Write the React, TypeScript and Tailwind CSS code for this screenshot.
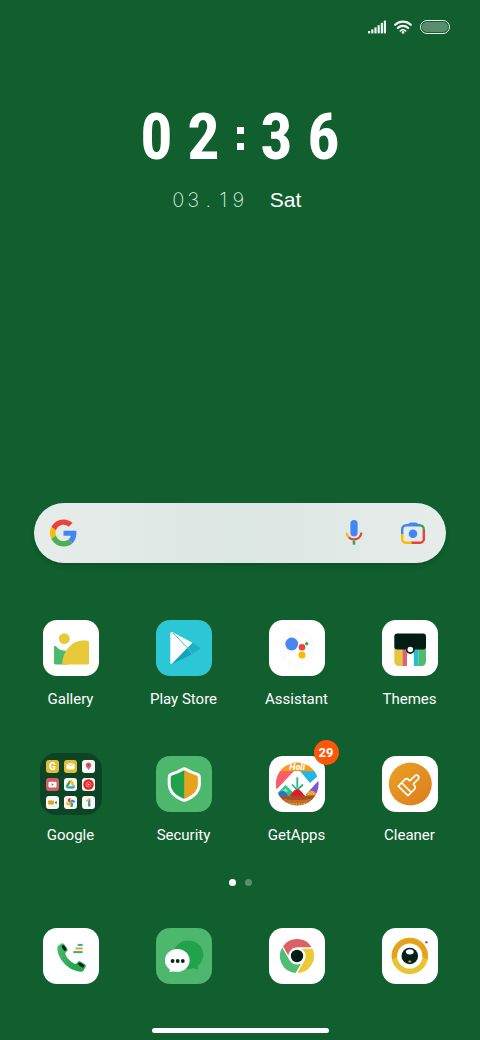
import React from 'react';

interface AppItem {
    name: string;
    icon: React.ReactNode;
    tile?: string;
    badge?: number;
}

const SignalIcon = () => (
    <svg className="w-[18px] h-[14px]" viewBox="0 0 18 14" fill="#eef5f0" aria-hidden="true">
        <rect x="0" y="11" width="2.2" height="2.4" />
        <rect x="3.2" y="9.4" width="2.2" height="4" />
        <rect x="6.4" y="7.4" width="2.2" height="6" />
        <rect x="9.6" y="5.2" width="2.2" height="8.2" />
        <rect x="12.8" y="2.8" width="2.2" height="10.6" />
        <rect x="15.8" y="0.6" width="2.2" height="12.8" />
    </svg>
);

const WifiIcon = () => (
    <svg className="w-[18px] h-[14px]" viewBox="0 0 18 14" fill="none" stroke="#eef5f0" strokeWidth="2.2" strokeLinecap="round" aria-hidden="true">
        <path d="M1.2 4.8a11.2 11.2 0 0 1 15.6 0" />
        <path d="M3.8 8a7.4 7.4 0 0 1 10.4 0" />
        <path d="M6.4 10.8a3.8 3.8 0 0 1 5.200 0" strokeWidth="1.8" />
        <circle cx="9" cy="12.4" r="1.3" fill="#eef5f0" stroke="none" />
    </svg>
);

const GoogleLogo = () => (
    <svg className="w-[27px] h-7" viewBox="0 0 48 48" aria-hidden="true">
        <path fill="#ea4335" d="M24 9.5c3.54 0 6.71 1.22 9.21 3.6l6.85-6.85C35.9 2.38 30.47 0 24 0 14.62 0 6.51 5.38 2.56 13.22l7.98 6.19C12.43 13.72 17.74 9.5 24 9.5z" />
        <path fill="#4285f4" d="M46.98 24.55c0-1.57-.15-3.09-.38-4.55H24v9.02h12.94c-.58 2.96-2.26 5.48-4.78 7.18l7.73 6c4.51-4.18 7.09-10.36 7.09-17.65z" />
        <path fill="#fbbc05" d="M10.53 28.59c-.48-1.45-.76-2.99-.76-4.59s.27-3.14.76-4.59l-7.98-6.19C.92 16.46 0 20.12 0 24c0 3.88.92 7.54 2.56 10.78l7.97-6.19z" />
        <path fill="#4caf50" d="M24 48c6.48 0 11.93-2.13 15.89-5.81l-7.73-6c-2.15 1.45-4.92 2.3-8.16 2.3-6.26 0-11.57-4.22-13.47-9.91l-7.98 6.19C6.51 42.62 14.62 48 24 48z" />
    </svg>
);

const MicIcon = () => (
    <svg className="w-[18px] h-[26px]" viewBox="0 0 18 26" fill="none" strokeWidth="2.2" aria-hidden="true">
        <rect x="5.4" y="0" width="7.2" height="16.4" rx="3.6" fill="#4285f4" />
        <path d="M1.6 12.6c.2 2 1 3.6 2.3 4.800" stroke="#fbbc05" />
        <path d="M3.7 17.2c1.4 1.4 3.2 2.2 5.3 2.2 4.1 0 7-2.8 7.4-6.8" stroke="#ea4335" />
        <path d="M9 20.5v4.2" stroke="#34a853" strokeWidth="2.6" />
    </svg>
);

const LensIcon = () => (
    <svg className="w-6 h-6" viewBox="0 0 24 24" fill="none" strokeWidth="2.4" aria-hidden="true">
        <path d="M1.2 13.4V8.2a4 4 0 0 1 4-4h13" stroke="#4285f4" />
        <path d="M7 5V3.6C7.600 2.2 8.6 1.4 10 1.4h4.4c1.4 0 2.4.8 3 2.2V5z" fill="#4285f4" />
        <path d="M18 4.2h.8a4 4 0 0 1 4 4v.9" stroke="#34a853" />
        <path d="M22.8 9v9.2a3.6 3.6 0 0 1-3.6 3.6h-9" stroke="#ea4335" />
        <path d="M1.2 13v5.2a3.6 3.6 0 0 0 3.6 3.6h5.6" stroke="#fbbc05" />
        <circle cx="12" cy="12.8" r="4.3" fill="#4285f4" />
    </svg>
);

const GalleryIcon = () => (
    <svg viewBox="0 0 56 56" aria-hidden="true">
        <path fill="#4cb96d" d="M11 27.2c0-1.2 1.4-1.7 2.2-.8 2.8 3.4 7 5 12 4.2L25 44.4H12.4c-.8 0-1.4-.6-1.4-1.4z" />
        <path fill="#e8c93a" d="M19.2 44.4C19.4 31 28.5 20.4 41 20.4c1.6 0 2.7.1 3.7.3.9.2 1.3.7 1.3 1.6V43c0 .8-.6 1.4-1.4 1.4z" />
        <circle cx="21.3" cy="18.6" r="5.4" fill="#e8c93a" />
    </svg>
);

const PlayIcon = () => (
    <svg viewBox="0 0 56 56" aria-hidden="true">
        <path fill="#1db0c6" d="M36.2 22.4 43.7 27.4c.7.5.7 1.2 0 1.7L36 34.3 16 44z" />
        <path fill="#fff" d="M14.3 13.6c0-1.500 1.200-2.200 2.500-1.300L36.4 22.8 16.4 43.2c-1 1-2.1.6-2.1-.8z" />
        <path fill="#179cb3" d="M31.6 27.7 36.3 34.2 16.4 43.7z" opacity=".7" />
        <path d="M17.2 13 31.5 28" stroke="#2bbccd" strokeWidth=".9" />
        <path d="M31.5 28 36 34" stroke="#5ad4e2" strokeWidth=".7" />
    </svg>
);

const AssistantIcon = () => (
    <svg viewBox="0 0 56 56" aria-hidden="true">
        <circle cx="28" cy="28" r="17" fill="#fefefe" stroke="#f5f5f5" strokeWidth=".8" />
        <circle cx="22.7" cy="24" r="6.4" fill="#4a86f0" />
        <circle cx="33" cy="27.3" r="3.3" fill="#e8453c" />
        <circle cx="37.7" cy="23.7" r="1.7" fill="#35a853" />
        <circle cx="33" cy="35" r="3.6" fill="#fbb90d" />
    </svg>
);

const ThemesIcon = () => (
    <svg viewBox="0 0 56 56" aria-hidden="true">
        <path fill="#e6c63c" d="M12.3 27h8.1v19h-3.6a4.5 4.5 0 0 1-4.5-4.5z" />
        <path fill="#d9666a" d="M20.4 27h5v19h-5z" />
        <path fill="#1fc2d3" d="M31.6 27h4.7v19h-4.7z" />
        <path fill="#4eba70" d="M36.3 27H44v14.5a4.5 4.500 0 0 1-4.5 4.5h-3.2z" />
        <path fill="#fff" d="M25 46V35.500a3.4 3.4 0 0 1 6.8 0V46z" />
        <rect x="12.3" y="13.5" width="31.7" height="16" rx="3" fill="#031d15" />
        <circle cx="28.3" cy="29.5" r="4.4" fill="#031d15" />
        <circle cx="28.3" cy="29.5" r="2.8" fill="#fff" />
    </svg>
);

const SecurityIcon = () => (
    <svg viewBox="0 0 56 56" aria-hidden="true">
        <path fill="#1fa24b" d="M28.3 12.8c-4.3 2.7-8.2 4.3-12.2 5.2-1.5.4-2.4 1.3-2.4 2.8v7.2c0 7.4 5.4 12.6 12.7 15.8.7.3 1.3.4 1.9.4z" />
        <path fill="#e7a31d" d="M28.3 12.8c4.3 2.7 8.2 4.3 12.2 5.2 1.5.4 2.4 1.3 2.4 2.8v7.2c0 7.4-5.4 12.6-12.7 15.8-.7.3-1.3.4-1.9.4z" />
        <path fill="none" stroke="#fff" strokeWidth="3" strokeLinejoin="round" d="M26.6 13.3c1.2-.7 2.2-.7 3.4 0 3.4 2.2 6.8 3.6 10.4 4.6 2 .6 3 1.7 3 3.5v7c0 6.9-5.2 11.7-12.6 15.3-1.7.8-3.3.8-5 0-7.4-3.6-12.6-8.4-12.6-15.300v-7c0-1.800 1-2.900 3-3.500 3.600-1 7-2.400 10.400-4.600z" />
    </svg>
);

const GetAppsIcon = () => (
    <svg viewBox="0 0 56 56" aria-hidden="true">
        <defs>
            <clipPath id="holi-disc">
                <circle cx="28.2" cy="28" r="21.4" />
            </clipPath>
        </defs>
        <g clipPath="url(#holi-disc)">
            <rect x="6" y="6" width="45" height="45" fill="#fff" />
            <path fill="#fb5c6c" d="M6 15h19L7 34z" />
            <path fill="#20b7e6" d="M31 15h19v4l-9 8z" />
            <path fill="#7c56d6" d="M50 24v15H36.500z" />
            <path fill="#35c483" d="M8 42V37.500l8.500-8.500L26 38v4z" />
            <path fill="#8ce0b4" d="m16.5 32 2.5 3-3 2-2.5-2z" />
            <rect x="6" y="6" width="45" height="9.2" fill="#f99a18" />
            <path d="M28.3 22v9M28.3 34l-4.8-5M28.3 34l5.2-5" stroke="#22b982" strokeWidth="1.8" strokeLinecap="round" />
            <path fill="#2074d8" d="M8.5 40c.8-3.5 3-5 5.3-5s4 2 5.2 5z" />
            <path fill="#f5a623" d="M37 40c1.2-3.5 3.5-5.2 5.6-5.2S47 36.5 48 40z" />
            <path fill="#dc1b2b" d="M20 40c2.5-1 4.2-6.800 8.300-6.800s5.800 5.800 8.200 6.800z" />
            <path fill="#a2531f" d="M6 40c7-1.500 14 1 22 .5S43 38 51 40v12H6z" />
            <path fill="#c46d2a" d="M14 42.500c9 2 19 2 29 0l-4 5c-7 2-14 2-21 0z" />
            <path d="M17 46.500c7 2 16 2 23 0" fill="none" stroke="#f0a63c" strokeWidth="1.2" strokeDasharray="1.5 1" />
            <path fill="#d52a35" d="m21 39 14 0-2 2.200-10 0z" />
        </g>
        <text x="28.2" y="14.2" textAnchor="middle" fontSize="9" fontWeight="900" fontStyle="italic" fontFamily="Roboto, sans-serif" fill="#fff">Holi</text>
    </svg>
);

const CleanerIcon = () => (
    <svg viewBox="0 0 56 56" fill="none" aria-hidden="true">
        <defs>
            <linearGradient id="cleaner-disc" x1="0" y1="0" x2="1" y2="1">
                <stop offset="0" stopColor="#e9a224" />
                <stop offset="1" stopColor="#dd7c1c" />
            </linearGradient>
        </defs>
        <circle cx="28.3" cy="28" r="21.5" fill="url(#cleaner-disc)" />
        <g transform="translate(26.4 29.6) rotate(45)" stroke="#fff" strokeWidth="1.7" strokeLinejoin="round">
            <path d="M-6.8 7.5v-9.500a2.300 2.300 0 0 1 2.300-2.300h1.300c.6 0 .9-.4.9-1v-6.200a2.300 2.300 0 0 1 4.600 0v6.200c0 .6.3 1 .9 1h1.300a2.300 2.300 0 0 1 2.300 2.300v9.500z" />
            <path d="M-6.800 2.800H6.800" />
        </g>
    </svg>
);

const PhoneIcon = () => (
    <svg viewBox="0 0 56 56" aria-hidden="true">
        <defs>
            <linearGradient id="handset" x1="0" y1="0" x2="1" y2="1">
                <stop offset="0" stopColor="#4fbd70" />
                <stop offset=".7" stopColor="#27a552" />
            </linearGradient>
        </defs>
        <path fill="url(#handset)" d="M15.8 17.3 18.4 15.5c.9-.6 1.9-.4 2.6.4l3.3 4.6c.8 1.2.5 2.3-.6 3-1.6 1-1.6 2.5-.5 4.5 1.7 3 4.2 5.5 7.3 7.3 1.7 1 3.1.6 3.9-.8.7-1.3 1.8-1.6 3-.9l4.4 2.7c1.2.7 1.4 1.8.7 2.9l-2 3.2c-.6.9-1.3 1.3-2.5 1.3-11.6-.6-23-11.6-23.7-23.2 0-1.4.4-2.5 1.5-3.2z" />
        <path d="m20.2 18.6 1.800 2.700M36.700 36.100l3 1.900" stroke="#06231a" strokeWidth="3" strokeLinecap="round" />
        <path d="M34.7 16.9h5" stroke="#18b3c6" strokeWidth="2" />
        <path d="M32.5 20.5h7.2" stroke="#eba01f" strokeWidth="2" />
        <path d="M30.3 24.1h9.4" stroke="#3db266" strokeWidth="2" />
    </svg>
);

const MessagesIcon = () => (
    <svg viewBox="0 0 56 56" aria-hidden="true">
        <ellipse cx="32.3" cy="26.8" rx="15" ry="14.2" fill="#22a24d" />
        <path fill="#22a24d" d="M35 38h7.5c-.7 1-.9 2-.4 3.2-2.6.3-5-.6-7.1-3.2z" />
        <ellipse cx="21.3" cy="32.4" rx="12.3" ry="11.4" fill="#fff" />
        <path fill="#fff" d="M13 38c1.3 2 1.2 3.8.2 5.8 2.4.4 4.5-.3 6.3-1.8z" />
        <circle cx="16.6" cy="33" r="1.9" fill="#06231a" />
        <circle cx="21.7" cy="33" r="1.9" fill="#06231a" />
        <circle cx="26.8" cy="33" r="1.9" fill="#06231a" />
    </svg>
);

const ChromeIcon = () => (
    <svg viewBox="0 0 56 56" aria-hidden="true">
        <g transform="translate(28 28)" stroke="#fff" strokeWidth="1.2" strokeLinejoin="round">
            <path fill="#da6166" d="M0-8H15.8A17.7 17.7 0 0 0-14.8-9.7L-6.9 4A8 8 0 0 1 0-8z" />
            <path fill="#ecc937" transform="rotate(120)" d="M0-8H15.8A17.7 17.7 0 0 0-14.8-9.7L-6.9 4A8 8 0 0 1 0-8z" />
            <path fill="#4fbd72" transform="rotate(240)" d="M0-8H15.8A17.7 17.7 0 0 0-14.8-9.7L-6.9 4A8 8 0 0 1 0-8z" />
        </g>
        <circle cx="28" cy="28" r="6.2" fill="#031d15" />
    </svg>
);

const CameraIcon = () => (
    <svg viewBox="0 0 56 56" aria-hidden="true">
        <circle cx="27.8" cy="28" r="18.2" fill="#e9c432" />
        <path fill="#e4a21b" d="M27.8 9.8A18.2 18.2 0 0 0 10 31.500l5-2.500h25.600l5 2.500A18.200 18.200 0 0 0 27.8 9.800z" />
        <circle cx="27.8" cy="28" r="12.6" fill="#fff" />
        <circle cx="27.8" cy="28" r="8.3" fill="#06201a" />
        <ellipse cx="27.8" cy="23.8" rx="3.9" ry="2.6" fill="#fff" />
        <ellipse cx="27.8" cy="33.5" rx="1.6" ry="1.1" fill="#e9b21b" />
        <circle cx="44.4" cy="14.2" r="1.2" fill="#d9485c" />
    </svg>
);

const folderItems = [
    {
        name: 'Search',
        tile: 'bg-[#e3bd33]',
        icon: <text x="6.5" y="10" textAnchor="middle" fontSize="10" fontWeight="800" fontFamily="Roboto, sans-serif" fill="#fff">G</text>,
    },
    {
        name: 'Mail',
        tile: 'bg-[#e3bd33]',
        icon: <path fill="#fff" d="M2.5 3.8 6.500 6l4-2.200V8A1.500 1.500 0 0 1 9 9.500H4A1.500 1.500 0 0 1 2.500 8z M3.300 3.300h6.400l-3.200 1.900z" />,
    },
    {
        name: 'Maps',
        tile: 'bg-[#f7f7f5]',
        icon: (
            <>
                <path fill="#d8606b" d="M6.5 2.5a2.7 2.7 0 0 1 2.7 2.7c0 2-2 2.7-2.7 5-.7-2.3-2.7-3-2.7-5a2.7 2.7 0 0 1 2.7-2.7z" />
                <circle cx="6.5" cy="5.2" r="1" fill="#a8323f" />
            </>
        ),
    },
    {
        name: 'YouTube',
        tile: 'bg-[#d55f66]',
        icon: (
            <>
                <rect x="2.5" y="3.7" width="8" height="5.8" rx="1.3" fill="#fff" />
                <path fill="#d55f66" d="m5.600 5.200 2.400 1.400L5.600 8z" />
            </>
        ),
    },
    {
        name: 'Drive',
        tile: 'bg-[#f7f7f5]',
        icon: (
            <>
                <path fill="#2ba84f" d="m5.200 2.300-3.500 6 1.400 2.300 3.400-6z" />
                <path fill="#fbbc05" d="M5.200 2.300h2.700l3.400 6H8.600z" />
                <path fill="#1f9df0" d="M4.500 8.300h6.800l-1.300 2.300H3.100z" />
            </>
        ),
    },
    {
        name: 'Music',
        tile: 'bg-[#f7f7f5]',
        icon: (
            <>
                <circle cx="6.5" cy="6.5" r="5.2" fill="#ee1c1c" />
                <circle cx="6.5" cy="6.5" r="2.6" fill="none" stroke="#fff" strokeWidth=".5" />
                <path fill="#fff" d="m5.700 5.300 2.100 1.200-2.100 1.200z" />
            </>
        ),
    },
    {
        name: 'Meet',
        tile: 'bg-[#f7f7f5]',
        icon: (
            <>
                <rect x="2.2" y="4.6" width="5.6" height="4" rx=".6" fill="#e3a51f" />
                <path fill="#2ba84f" d="m8.500 6.500 2.300-1.700v3.800z" />
            </>
        ),
    },
    {
        name: 'Photos',
        tile: 'bg-[#f7f7f5]',
        icon: (
            <>
                <path fill="#ea4335" d="M6.5 6.5V2a2.200 2.200 0 0 0-1 4.500z" />
                <path fill="#4285f4" d="M6.500 6.500H11a2.200 2.200 0 0 0-4.500-1z" />
                <path fill="#34a853" d="M6.500 6.500V11a2.200 2.200 0 0 0 1-4.500z" />
                <path fill="#fbbc05" d="M6.500 6.500H2a2.200 2.200 0 0 0 4.500 1z" />
            </>
        ),
    },
    {
        name: 'One',
        tile: 'bg-[#f7f7f5]',
        icon: (
            <>
                <path d="M7.2 3.500v6" stroke="#4285f4" strokeWidth="2.2" strokeLinecap="round" />
                <path d="M7.2 8v1.500" stroke="#34a853" strokeWidth="2.2" strokeLinecap="round" />
                <path d="M4.800 4.700 7 3.400" stroke="#fbbc05" strokeWidth="1.800" strokeLinecap="round" />
            </>
        ),
    },
];

const GoogleFolder = () => (
    <div className="w-[62px] h-[62px] shrink-0 rounded-2xl bg-[#0e4426] grid grid-cols-[repeat(3,13px)] gap-[5px] place-content-center">
        {folderItems.map((item) => (
            <svg key={item.name} viewBox="0 0 13 13" className={`w-[13px] h-[13px] rounded-[3px] ${item.tile}`} aria-hidden="true">
                {item.icon}
            </svg>
        ))}
    </div>
);

const homeApps: AppItem[] = [
    { name: 'Gallery', icon: <GalleryIcon /> },
    { name: 'Play Store', icon: <PlayIcon />, tile: 'bg-[#2bc7d7]' },
    { name: 'Assistant', icon: <AssistantIcon /> },
    { name: 'Themes', icon: <ThemesIcon /> },
    { name: 'Google', icon: <GoogleFolder />, tile: 'bg-transparent' },
    { name: 'Security', icon: <SecurityIcon />, tile: 'bg-[#4db76d]' },
    { name: 'GetApps', icon: <GetAppsIcon />, badge: 29 },
    { name: 'Cleaner', icon: <CleanerIcon /> },
];

const dockApps: AppItem[] = [
    { name: 'Phone', icon: <PhoneIcon /> },
    { name: 'Messages', icon: <MessagesIcon />, tile: 'bg-[#4db76d]' },
    { name: 'Chrome', icon: <ChromeIcon /> },
    { name: 'Camera', icon: <CameraIcon /> },
];

const AppTile: React.FC<{ item: AppItem; showLabel?: boolean }> = ({ item, showLabel = false }) => (
    <button type="button" aria-label={showLabel ? undefined : item.name} className="flex flex-col items-center gap-[13px]">
        <span className={`relative w-14 h-14 rounded-[14px] flex items-center justify-center ${item.tile ?? 'bg-white'}`}>
            {item.icon}
            {item.badge && (
                <span className="absolute -top-4 -right-3.5 w-[25px] h-[25px] rounded-full bg-[#fc5606] text-[13px] leading-none font-bold flex items-center justify-center">
                    {item.badge}
                </span>
            )}
        </span>
        {showLabel && <span className="text-[15px] leading-5 whitespace-nowrap">{item.name}</span>}
    </button>
);

const Clock = () => (
    <div className="flex flex-col items-center">
        <time className="flex text-[64px] leading-[72px] font-bold font-['Roboto_Condensed',Roboto,sans-serif]">
            <span className="w-[47px] text-center">0</span>
            <span className="w-[47px] text-center">2</span>
            <span className="w-[26px] flex flex-col items-center justify-center gap-[9px]" aria-label=":">
                <i className="w-[7px] h-[7px] bg-white" />
                <i className="w-[7px] h-[7px] bg-white" />
            </span>
            <span className="w-[47px] text-center">3</span>
            <span className="w-[47px] text-center">6</span>
        </time>
        <div className="mt-3 pr-2 flex items-center gap-6 leading-7">
            <div className="flex font-[Inter,sans-serif] text-xl leading-7 font-extralight text-[#dcebe0]">
                {['0', '3', '.', '1', '9'].map((char, i) => (
                    <span key={i} className="w-[15px] text-center">{char}</span>
                ))}
            </div>
            <span className="font-['Liberation_Sans',sans-serif] text-[21px]">Sat</span>
        </div>
    </div>
);

const App = () => (
    <div className="min-h-screen bg-[#115e2e] text-white font-[Roboto,sans-serif] flex flex-col">
        <header className="flex items-center justify-end gap-2 pt-5 pr-[30px]">
            <SignalIcon />
            <WifiIcon />
            <div className="w-[30px] h-[14px] rounded-full border-[1.5px] border-[#eef5f0] p-px">
                <div className="h-full rounded-full bg-white/30" />
            </div>
        </header>

        <div className="pt-[68px]">
            <Clock />
        </div>

        <form className="mt-auto mx-[34px] h-[60px] rounded-full bg-linear-to-r from-[#e6ecea] via-[#dde7e3] to-[#e6ecea] shadow-md flex items-center pl-4 pr-[21px]" onSubmit={(e) => e.preventDefault()}>
            <GoogleLogo />
            <input type="search" aria-label="Search" className="flex-1 min-w-0 h-full px-3 bg-transparent outline-none text-slate-800" />
            <button type="button" aria-label="Voice search" className="mr-[38px]"><MicIcon /></button>
            <button type="button" aria-label="Lens"><LensIcon /></button>
        </form>

        <main className="mt-[57px] px-3.5 grid grid-cols-4 gap-y-[47px]">
            {homeApps.map((item) => (
                <AppTile key={item.name} item={item} showLabel />
            ))}
        </main>

        <div className="mt-[34px] flex justify-center gap-[9px]">
            <span className="w-[7px] h-[7px] rounded-full bg-white" />
            <span className="w-[7px] h-[7px] rounded-full bg-white/30" />
        </div>

        <nav className="mt-[42px] px-3.5 grid grid-cols-4">
            {dockApps.map((item) => (
                <AppTile key={item.name} item={item} />
            ))}
        </nav>

        <div className="mt-11 mb-[7px] mx-auto w-[177px] h-[5px] rounded-full bg-white" />
    </div>
);

export default App;
